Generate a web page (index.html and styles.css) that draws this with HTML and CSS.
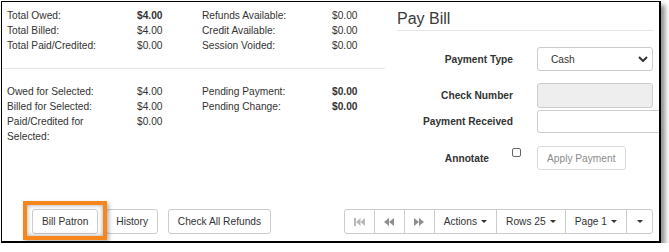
FILE: index.html
```html
<!DOCTYPE html>
<html lang="en">
<head>
    <meta charset="UTF-8">
    <title>Pay Bill</title>
    <link rel="stylesheet" href="styles.css">
</head>
<body>
<div class="frame">
    <div class="top">
        <div class="summary">
            <div class="grid">
                <span>Total Owed:</span><strong>$4.00</strong><span>Refunds Available:</span><span>$0.00</span>
                <span>Total Billed:</span><span>$4.00</span><span>Credit Available:</span><span>$0.00</span>
                <span>Total Paid/Credited:</span><span>$0.00</span><span>Session Voided:</span><span>$0.00</span>
            </div>
            <hr class="sep">
            <div class="grid">
                <span>Owed for Selected:</span><span>$4.00</span><span>Pending Payment:</span><strong>$0.00</strong>
                <span>Billed for Selected:</span><span>$4.00</span><span>Pending Change:</span><strong>$0.00</strong>
                <span class="lbl">Paid/Credited for Selected:</span><span>$0.00</span><span></span><span></span>
            </div>
        </div>

        <div class="paybill">
            <h2 class="title">Pay Bill</h2>
            <div class="form-row row-type">
                <label>Payment Type</label>
                <div class="select">
                    <span>Cash</span>
                    <svg width="10" height="6" viewBox="0 0 10 6"><path d="M1 1 L5 5 L9 1" fill="none" stroke="#333" stroke-width="2"/></svg>
                </div>
            </div>
            <div class="form-row row-check">
                <label>Check Number</label>
                <input type="text" class="field field-disabled" disabled>
            </div>
            <div class="form-row row-received">
                <label>Payment Received</label>
                <input type="text" class="field field-wide">
            </div>
            <div class="form-row row-annotate">
                <label class="short">Annotate</label>
                <span class="checkbox"></span>
                <button class="btn btn-disabled">Apply Payment</button>
            </div>
        </div>
    </div>

    <div class="bar">
        <div class="actions-left">
            <button class="btn">Bill Patron</button>
            <button class="btn btn-history">History</button>
            <button class="btn">Check All Refunds</button>
        </div>
        <div class="pager">
            <button class="pg pg-icon">
                <svg width="11" height="8" viewBox="0 0 11 8"><rect x="0" y="0" width="2" height="8" fill="#b8b8b8"/><polygon points="2,4 6.5,0 6.5,8" fill="#b8b8b8"/><polygon points="6.5,4 11,0 11,8" fill="#b8b8b8"/></svg>
            </button>
            <button class="pg pg-icon">
                <svg width="10" height="8" viewBox="0 0 10 8"><polygon points="0,4 5,0 5,8" fill="#8f8f8f"/><polygon points="5,4 10,0 10,8" fill="#8f8f8f"/></svg>
            </button>
            <button class="pg pg-icon">
                <svg width="10" height="8" viewBox="0 0 10 8"><polygon points="0,0 5,4 0,8" fill="#8f8f8f"/><polygon points="5,0 10,4 5,8" fill="#8f8f8f"/></svg>
            </button>
            <button class="pg">Actions <span class="caret"></span></button>
            <button class="pg">Rows 25 <span class="caret"></span></button>
            <button class="pg">Page 1 <span class="caret"></span></button>
            <button class="pg pg-last"><span class="caret"></span></button>
        </div>
    </div>

    <div class="highlight"></div>
</div>
</body>
</html>
```

FILE: styles.css
```css
body {
    margin: 0;
    background: #fff;
    font-family: "Liberation Sans", Arial, sans-serif;
    font-size: 10.2px;
    color: #333;
}
.frame {
    position: relative;
    display: flex;
    flex-direction: column;
    width: 657px;
    height: 239px;
    margin: 1px 0 0 1px;
    border: 1px solid #000;
    border-right-width: 2px;
    border-bottom-width: 2px;
    box-shadow: 4px 4px 5px rgba(0, 0, 0, 0.45);
    overflow: hidden;
}
.top {
    display: flex;
}
.summary {
    flex-shrink: 0;
    width: 383px;
    padding-top: 6px;
}
.grid {
    display: grid;
    grid-template-columns: 130px 65px 130px 1fr;
    padding-left: 5px;
    line-height: 15px;
}
.grid .lbl {
    padding-right: 16px;
}
.sep {
    border: 0;
    border-top: 1px solid #e6e6e6;
    margin: 15px 0;
}
.paybill {
    flex: 1;
    min-width: 0;
    padding: 7px 6px 0 12px;
}
.title {
    margin: 0;
    font-size: 16px;
    font-weight: normal;
    line-height: 20px;
    padding-bottom: 1px;
    border-bottom: 1px solid #e6e6e6;
    color: #3a3a3a;
}
.form-row {
    display: flex;
    align-items: center;
}
.form-row label {
    flex-shrink: 0;
    width: 116px;
    margin-right: 24px;
    text-align: right;
    font-weight: bold;
}
.row-type {
    margin-top: 16px;
}
.row-check {
    margin-top: 12px;
}
.row-received {
    margin-top: 2px;
}
.row-annotate {
    margin-top: 13px;
}
.form-row label.short {
    width: 92px;
    margin-right: 0;
}
.select {
    box-sizing: border-box;
    display: flex;
    align-items: center;
    justify-content: space-between;
    flex-shrink: 0;
    width: 116px;
    height: 24px;
    padding: 0 4px 0 13px;
    border: 1px solid #ccc;
    border-radius: 3px;
}
.field {
    box-sizing: border-box;
    flex-shrink: 0;
    width: 116px;
    height: 25px;
    margin: 0;
    border: 1px solid #ccc;
    border-radius: 3px;
    background: #fff;
}
.field-disabled {
    background: #eee;
}
.field-wide {
    width: 135px;
    height: 23px;
}
.checkbox {
    align-self: flex-start;
    flex-shrink: 0;
    width: 7px;
    height: 7px;
    margin: 2px 0 0 23px;
    border: 1px solid #666;
    border-radius: 2px;
}
.btn {
    box-sizing: border-box;
    height: 25px;
    padding: 0 9px;
    border: 1px solid #ccc;
    border-radius: 3px;
    background: #fff;
    font-family: inherit;
    font-size: 10.2px;
    color: #333;
}
.btn-disabled {
    height: 24px;
    margin-left: 16px;
    color: #8a8a8a;
    border-color: #dadada;
}
.bar {
    display: flex;
    justify-content: space-between;
    margin-top: auto;
    padding: 0 6px 7px 30px;
}
.actions-left .btn {
    margin-right: 5px;
}
.actions-left .btn-history {
    margin-right: 7px;
}
.pager {
    display: flex;
}
.pg {
    box-sizing: border-box;
    display: flex;
    align-items: center;
    height: 25px;
    margin-left: -1px;
    padding: 0 9px;
    border: 1px solid #ccc;
    background: #fff;
    font-family: inherit;
    font-size: 10.2px;
    color: #333;
}
.pg:first-child {
    margin-left: 0;
    border-radius: 3px 0 0 3px;
}
.pg-icon {
    justify-content: center;
    width: 31px;
    padding: 0;
}
.pg-last {
    width: 27px;
    justify-content: center;
    padding: 0;
    border-radius: 0 3px 3px 0;
}
.caret {
    display: inline-block;
    width: 0;
    height: 0;
    margin-left: 4px;
    border-top: 3px solid #333;
    border-left: 3px solid transparent;
    border-right: 3px solid transparent;
}
.pg-last .caret {
    margin-left: 0;
}
.highlight {
    position: absolute;
    left: 21px;
    top: 199px;
    box-sizing: border-box;
    width: 84px;
    height: 39px;
    border: 4px solid #f7861c;
    box-shadow: inset 0 0 5px rgba(0, 0, 0, 0.35), 2px 2px 4px rgba(0, 0, 0, 0.3);
}
```
